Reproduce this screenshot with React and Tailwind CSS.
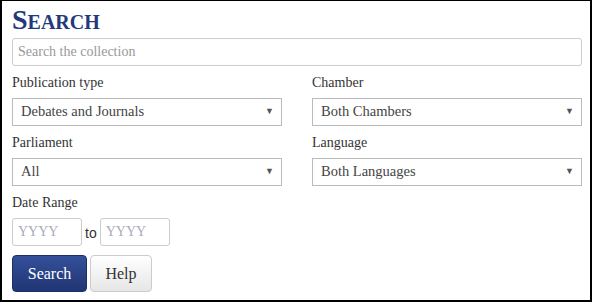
import { useState } from "react";

const labelCls = "block text-[14px] leading-[18px] text-[#333] mb-[6px]";

function Select({ value, options }) {
  return (
    <div className="relative">
      <select
        defaultValue={value}
        className="appearance-none w-full h-[28px] border border-[#bbb] bg-white pl-[8px] pr-[24px] text-[14.5px] text-[#444] outline-none"
      >
        {options.map((o) => (
          <option key={o}>{o}</option>
        ))}
      </select>
      <span className="pointer-events-none absolute right-[8px] top-[9px] text-[9px] leading-none text-[#555]">▼</span>
    </div>
  );
}

export default function App() {
  const [query, setQuery] = useState("");

  return (
    <div className="w-[592px] h-[302px] bg-white border-t border-x-2 border-b-2 border-black font-['Liberation_Serif',serif] box-border">
      <div className="pl-[10px] pr-[8px] pt-[4px]">
        <h2 className="text-[28px] leading-[30px] font-bold text-[#23397a] [font-variant-caps:small-caps]">Search</h2>

        <input
          value={query}
          onChange={(e) => setQuery(e.target.value)}
          placeholder="Search the collection"
          className="mt-[3px] w-full h-[28px] border border-[#ccc] rounded-[3px] px-[5px] text-[14px] text-[#333] placeholder:text-[#999] outline-none"
        />

        <div className="grid grid-cols-2 gap-x-[30px] mt-[8px]">
          <div>
            <label className={labelCls}>Publication type</label>
            <Select value="Debates and Journals" options={["Debates and Journals", "Debates", "Journals"]} />
          </div>
          <div>
            <label className={labelCls}>Chamber</label>
            <Select value="Both Chambers" options={["Both Chambers", "Senate", "House of Commons"]} />
          </div>
          <div className="mt-[8px]">
            <label className={labelCls}>Parliament</label>
            <Select value="All" options={["All"]} />
          </div>
          <div className="mt-[8px]">
            <label className={labelCls}>Language</label>
            <Select value="Both Languages" options={["Both Languages", "English", "French"]} />
          </div>
        </div>

        <div className="mt-[8px]">
          <label className={labelCls}>Date Range</label>
          <div className="flex items-end gap-[3px]">
            <input
              placeholder="YYYY"
              className="w-[70px] h-[28px] border border-[#ccc] rounded-[3px] px-[5px] text-[14px] placeholder:text-[#aab] outline-none"
            />
            <span className="text-[14px] text-[#333] mb-[2px] font-['Liberation_Sans',sans-serif]">to</span>
            <input
              placeholder="YYYY"
              className="w-[70px] h-[28px] border border-[#ccc] rounded-[3px] px-[5px] text-[14px] placeholder:text-[#aab] outline-none"
            />
          </div>
        </div>

        <div className="flex gap-[3px] mt-[9px]">
          <button
            type="button"
            className="w-[75px] h-[37px] rounded-[4px] bg-gradient-to-b from-[#34509a] to-[#213573] border border-[#1c2f66] text-white text-[16px]"
          >
            Search
          </button>
          <button
            type="button"
            className="w-[62px] h-[37px] rounded-[4px] bg-gradient-to-b from-white to-[#e6e6e6] border border-[#ccc] text-[#333] text-[16px]"
          >
            Help
          </button>
        </div>
      </div>
    </div>
  );
}
